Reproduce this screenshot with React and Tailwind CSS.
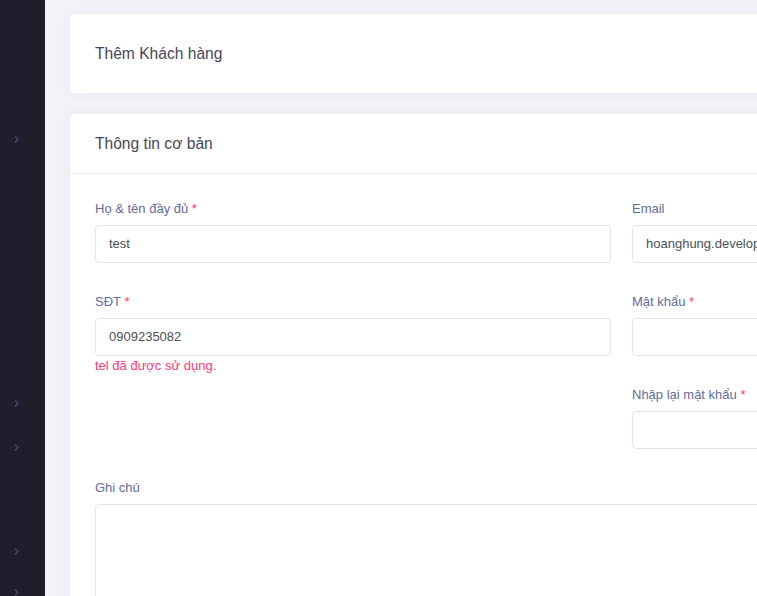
import React from 'react';

const Chevron = ({ top }) => (
  <svg
    className="absolute left-[13px]"
    style={{ top }}
    width="7"
    height="9"
    viewBox="0 0 7 9"
    fill="none"
  >
    <path d="M2 1.5 L5 4.5 L2 7.5" stroke="#4b4d73" strokeWidth="1.1" />
  </svg>
);

function Field({ label, required, value, error, className = '' }) {
  return (
    <div className={`flex flex-col mb-[30px] ${className}`}>
      <label className="text-[13px] leading-[17px] text-[#646c9a] mb-[8px]">
        {label}
        {required && <span className="text-[#fd397a]"> *</span>}
      </label>
      <div className="h-[38px] rounded-[4px] border border-[#e2e5ec] bg-white flex items-center px-[13px] text-[13px] text-[#495057] whitespace-nowrap overflow-hidden">
        {value}
      </div>
      {error && (
        <div className="text-[13px] leading-[19px] text-[#fd397a] -mb-[19px]">{error}</div>
      )}
    </div>
  );
}

export default function App() {
  return (
    <div
      className="w-[757px] h-[596px] overflow-hidden flex bg-[#f2f3f8]"
      style={{ fontFamily: '"Liberation Sans", Arial, sans-serif' }}
    >
      {/* Sidebar */}
      <div className="relative w-[45px] shrink-0 h-full bg-[#1e1e2d]">
        <Chevron top={135} />
        <Chevron top={399} />
        <Chevron top={443} />
        <Chevron top={547} />
        <Chevron top={588} />
      </div>

      {/* Content */}
      <div className="flex-1 min-w-0 pl-[25px] pt-[14px]">
        <div className="w-[1103px] flex flex-col gap-[21px]">
          <div className="h-[79px] bg-white rounded-[4px] shadow-[0_0_13px_0_rgba(82,63,105,0.05)] flex items-center px-[25px]">
            <h3 className="text-[15.6px] text-[#48465b]">Thêm Khách hàng</h3>
          </div>

          <div className="bg-white rounded-[4px] shadow-[0_0_13px_0_rgba(82,63,105,0.05)]">
            <div className="h-[60px] border-b border-[#ebedf2] flex items-center px-[25px]">
              <h3 className="text-[15.6px] text-[#48465b]">Thông tin cơ bản</h3>
            </div>
            <div className="px-[25px] pt-[26px] pb-[25px]">
              <div className="grid grid-cols-2 gap-x-[21px]">
                <div className="flex flex-col">
                  <Field label="Họ & tên đầy đủ" required value="test" />
                  <Field label="SĐT" required value="0909235082" error="tel đã được sử dụng." />
                </div>
                <div className="flex flex-col">
                  <Field label="Email" value="hoanghung.developer@gmail.com" />
                  <Field label="Mật khẩu" required value="" />
                  <Field label="Nhập lại mật khẩu" required value="" />
                </div>
              </div>
              <div className="flex flex-col">
                <label className="text-[13px] leading-[17px] text-[#646c9a] mb-[8px]">Ghi chú</label>
                <div className="h-[120px] rounded-[4px] border border-[#e2e5ec] bg-white" />
              </div>
            </div>
          </div>
        </div>
      </div>
    </div>
  );
}
